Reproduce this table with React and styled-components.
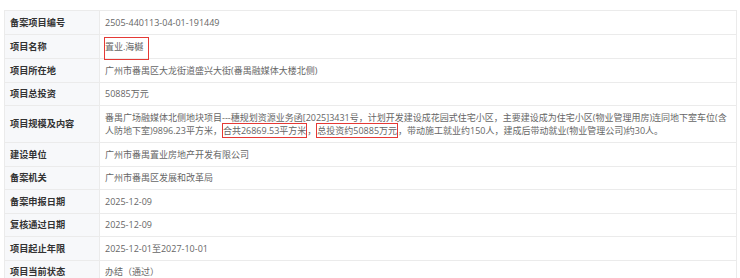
import styled, { createGlobalStyle } from "styled-components";
import { Fragment } from "react";

const Global = createGlobalStyle`
  body {
    margin: 0;
    background: #ffffff;
    font-family: "Open Sans", "Noto Sans CJK SC", sans-serif;
  }
`;

const Page = styled.div`
  padding: 10px 3px 0 4px;
`;

const Table = styled.div`
  display: grid;
  grid-template-columns: 95px 1fr;
  border-top: 1px solid #ebebeb;
  border-left: 1px solid #ebebeb;
  border-right: 1px solid #ebebeb;
`;

const Label = styled.div`
  background: #f7f8fa;
  border-bottom: 1px solid #ebebeb;
  border-right: 1px solid #ebebeb;
  padding: 4.5px 5px;
  font-size: 9.2px;
  line-height: 13.5px;
  font-weight: bold;
  color: #333;
  display: flex;
  align-items: center;
`;

const Value = styled.div`
  border-bottom: 1px solid #ebebeb;
  padding: 4.5px 5px;
  font-size: 9px;
  line-height: 13.5px;
  color: #666;
`;

const Mark = styled.span`
  border: 1.5px solid #e53935;
  ${(p) =>
    p.$pad &&
    `
    display: inline-block;
    margin: -2px 0 -6px -1px;
    padding: 2px 5px 5px 0;
  `}
`;

const rows = [
  ["备案项目编号", "2505-440113-04-01-191449"],
  ["项目名称", <Mark $pad>置业.海樾</Mark>],
  ["项目所在地", "广州市番禺区大龙街道盛兴大街(番禺融媒体大楼北侧)"],
  ["项目总投资", "50885万元"],
  [
    "项目规模及内容",
    <>
      番禺广场融媒体北侧地块项目---穗规划资源业务函[2025]3431号，计划开发建设成花园式住宅小区，主要建设成为住宅小区(物业管理用房)连同地下室车位(含人防地下室)9896.23平方米，
      <Mark>合共26869.53平方米</Mark>，<Mark>总投资约50885万元</Mark>，带动施工就业约150人，建成后带动就业(物业管理公司)约30人。
    </>,
  ],
  ["建设单位", "广州市番禺置业房地产开发有限公司"],
  ["备案机关", "广州市番禺区发展和改革局"],
  ["备案申报日期", "2025-12-09"],
  ["复核通过日期", "2025-12-09"],
  ["项目起止年限", "2025-12-01至2027-10-01"],
  ["项目当前状态", "办结（通过）"],
];

export default function App() {
  return (
    <Page>
      <Global />
      <Table>
        {rows.map(([label, value], i) => (
          <Fragment key={i}>
            <Label>{label}</Label>
            <Value>{value}</Value>
          </Fragment>
        ))}
      </Table>
    </Page>
  );
}
